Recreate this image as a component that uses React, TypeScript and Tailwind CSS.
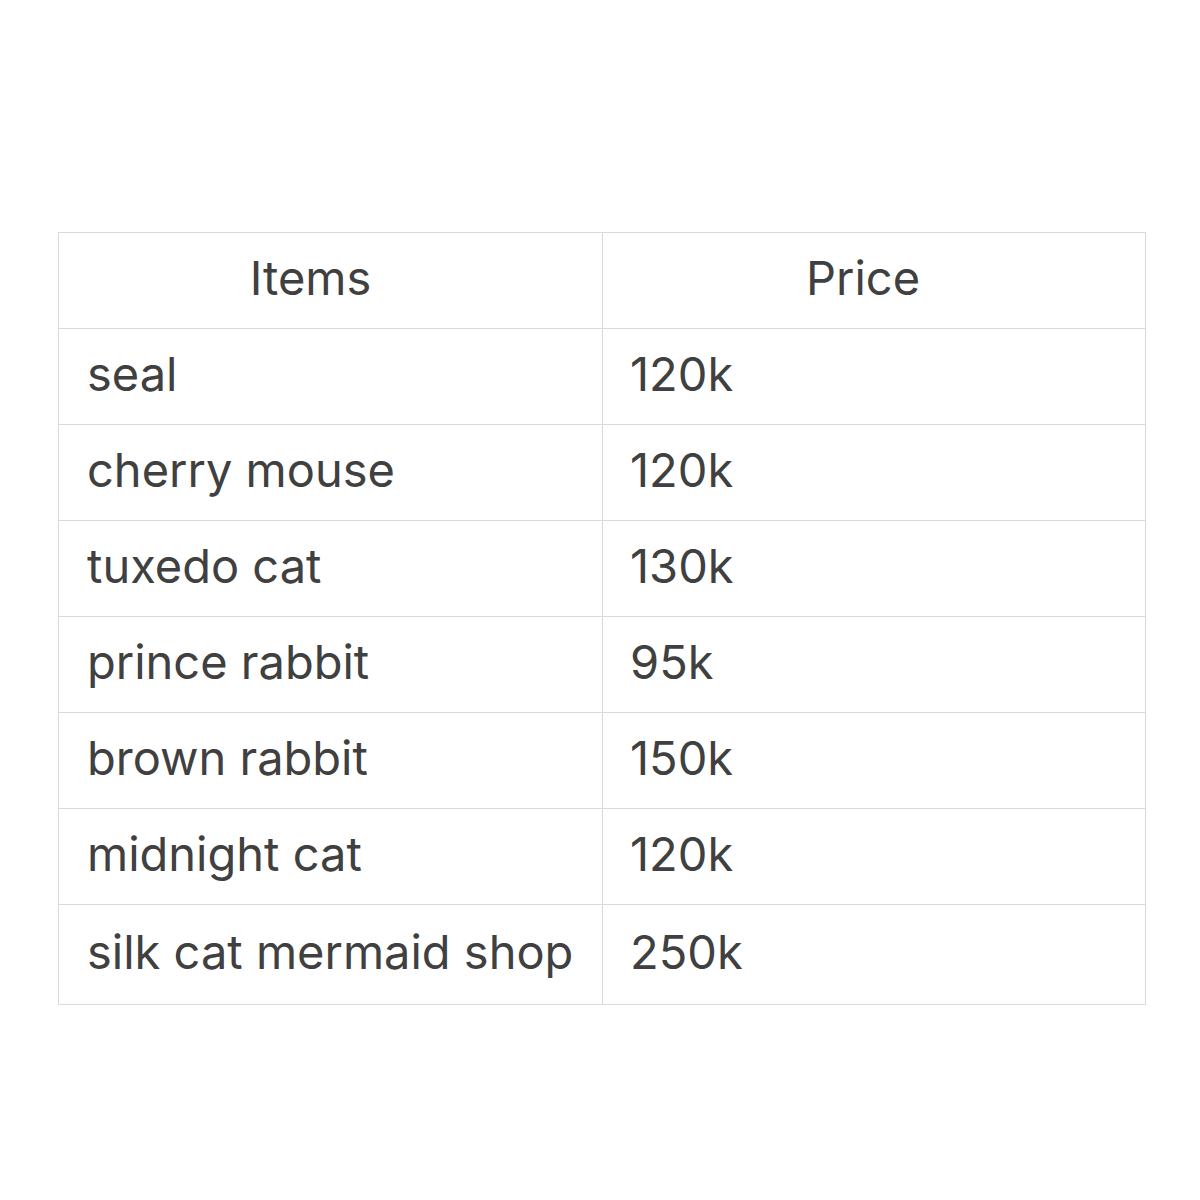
const rows: [string, string][] = [
  ['seal', '120k'],
  ['cherry mouse', '120k'],
  ['tuxedo cat', '130k'],
  ['prince rabbit', '95k'],
  ['brown rabbit', '150k'],
  ['midnight cat', '120k'],
  ['silk cat mermaid shop', '250k'],
]

export default function App() {
  return (
    <div className="w-[1200px] h-[1200px] bg-white pt-[232px] pl-[58px] font-['Inter',sans-serif] text-[#404040]">
      <table className="w-[1088px] border-collapse table-fixed">
        <colgroup>
          <col className="w-[544px]" />
          <col />
        </colgroup>
        <thead>
          <tr className="h-[96px]">
            <th className="border-[1.5px] border-[#dadada] text-center pr-[40px] pb-[4px] text-[47px] font-normal">Items</th>
            <th className="border-[1.5px] border-[#dadada] text-center pr-[22px] pb-[4px] text-[47px] font-normal">Price</th>
          </tr>
        </thead>
        <tbody>
          {rows.map(([item, price], i) => (
            <tr key={item} className={i === rows.length - 1 ? 'h-[100px]' : 'h-[96px]'}>
              <td className="border-[1.5px] border-[#dadada] pl-[28px] pb-[4px] text-[47px] whitespace-nowrap">{item}</td>
              <td className="border-[1.5px] border-[#dadada] pl-[27px] pb-[4px] text-[47px]">{price}</td>
            </tr>
          ))}
        </tbody>
      </table>
    </div>
  )
}
